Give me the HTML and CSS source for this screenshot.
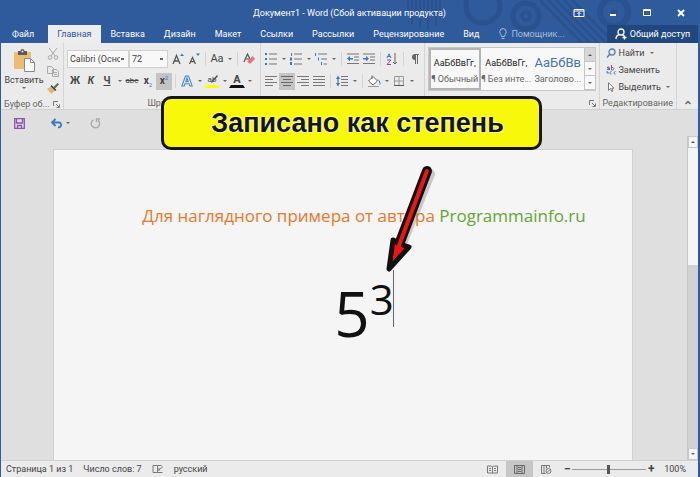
FILE: index.html
```html
<!DOCTYPE html>
<html lang="ru">
<head>
<meta charset="UTF-8">
<meta name="viewport" content="width=device-width, initial-scale=1">
<title>Документ1 - Word</title>
<link rel="stylesheet" href="styles.css">
</head>
<body>

<div class="window">

	<header class="top">
		<svg class="top-pattern" width="340" height="43" viewBox="0 0 340 43" fill="none" stroke="#2a5290">
			<path d="M100 0v16M104 0v24M108 0v12M112 0v28M116 0v18M120 0v30M124 0v14M128 0v26M132 0v16" stroke-width="2"/>
			<circle cx="175" cy="6" r="17" stroke-width="5"/>
			<circle cx="218" cy="16" r="13" stroke-width="5"/>
			<circle cx="218" cy="16" r="4" stroke-width="3"/>
			<path d="M232 0l42 43M240 0l42 43M248 0l42 43M256 0l42 43M264 0l42 43" stroke-width="3"/>
			<circle cx="306" cy="12" r="14" stroke-width="6"/>
			<circle cx="306" cy="12" r="3" fill="#2a5290"/>
		</svg>
		<div class="titlebar">
			<h1 class="title">Документ1 - Word (Сбой активации продукта)</h1>
			<div class="window-controls">
				<button aria-label="Параметры ленты"><svg width="12" height="10" viewBox="0 0 12 10" fill="none" stroke="#fff"><path d="M1 1.500h10v7H1zM1 3h10M6 8V4.500M4.500 6L6 4.500 7.500 6"/></svg></button>
				<button aria-label="Свернуть"><svg width="12" height="10" viewBox="0 0 12 10"><path d="M3 6h6v2H3z" fill="#fff"/></svg></button>
				<button aria-label="Развернуть"><svg width="12" height="10" viewBox="0 0 12 10" fill="none" stroke="#fff"><path d="M2.500 1.500h7v6h-7zM2 2.500h8"/></svg></button>
				<button aria-label="Закрыть"><svg width="12" height="10" viewBox="0 0 12 10" stroke="#fff" stroke-width="2"><path d="M3 2l6 6M9 2L3 8"/></svg></button>
			</div>
		</div>
		<nav class="tabs">
			<a class="tab tab-file" href="#">Файл</a>
			<a class="tab tab-active" href="#">Главная</a>
			<a class="tab" href="#">Вставка</a>
			<a class="tab" href="#">Дизайн</a>
			<a class="tab" href="#">Макет</a>
			<a class="tab" href="#">Ссылки</a>
			<a class="tab" href="#">Рассылки</a>
			<a class="tab" href="#">Рецензирование</a>
			<a class="tab" href="#">Вид</a>
			<label class="helper">
				<svg width="8" height="12" viewBox="0 0 8 12" fill="none" stroke="#a9bddc"><path d="M2.500 8.500C2.500 6.500 .8 6 .8 3.800a3.200 3.200 0 0 1 6.400 0C7.200 6 5.500 6.500 5.500 8.500zM2.500 10.500h3"/></svg>
				<input type="text" placeholder="Помощник..." aria-label="Помощник">
			</label>
			<button class="share">
				<svg width="12" height="12" viewBox="0 0 12 12" fill="none" stroke="#fff" stroke-width="1.300"><circle cx="6" cy="4" r="3"/><path d="M1 11c0-2.500 1.500-4 3.500-4.500M7.500 6.700L9 8M9.500 7.500v4M7.500 9.500h4"/></svg>
				Общий доступ
			</button>
		</nav>
	</header>

	<section class="ribbon">

		<div class="group group-clipboard">
			<div class="clipboard">
				<button class="paste">
					<svg width="23" height="24" viewBox="0 0 23 24"><path d="M1 3h17v17H1z" fill="#ebbd72"/><path d="M5 2h2.500a2 2 0 0 1 4 0H14v4H5z" fill="#5b5b5b"/><circle cx="9.500" cy="2.500" r="1" fill="#e9e9e9"/><path d="M11.500 9.500h6l4 4v9h-10z" fill="#fff" stroke="#8a8a8a"/><path d="M17.500 9.500v4h4" fill="none" stroke="#8a8a8a"/></svg>
					<span>Вставить</span>
					<i class="caret"></i>
				</button>
				<div class="clipboard-tools">
					<button aria-label="Вырезать"><svg width="12" height="12" viewBox="0 0 12 12" fill="none" stroke="#aaa"><path d="M2 0l6 8M10 0L4 8"/><circle cx="3" cy="9.500" r="1.800"/><circle cx="9" cy="9.500" r="1.800"/></svg></button>
					<button aria-label="Копировать"><svg width="12" height="12" viewBox="0 0 12 12" fill="#e9e9e9" stroke="#aaa"><path d="M.5 1.500h4l2 2v5h-6zM5.500 4.500h4l2 2v5h-6zM7 7.500h3M7 9.500h3"/></svg></button>
					<button aria-label="Формат по образцу"><svg width="12" height="12" viewBox="0 0 12 12"><path d="M10.500 1L12 2.500 8 6.500 6.500 5z" fill="#666"/><path d="M4.500 3l5 5L8 9 3.500 4.500z" fill="#444"/><path d="M3.500 5l4 4L4.500 12 0 7z" fill="#eeb368"/></svg></button>
				</div>
			</div>
			<div class="group-label">Буфер об...<svg class="launcher" width="7" height="7" viewBox="0 0 7 7" fill="none" stroke="#777"><path d="M.5 5V.5H5M3 3l3 3M6.500 3.500v3h-3"/></svg></div>
		</div>

		<div class="group group-font">
			<div class="tool-row">
				<select class="combo combo-font" aria-label="Шрифт"><option>Calibri (Основной текст)</option></select>
				<select class="combo combo-size" aria-label="Размер"><option>72</option></select>
				<button class="tool" aria-label="Увеличить размер"><svg width="12" height="12" viewBox="0 0 12 12" fill="none" stroke="#555" stroke-width="1.300"><path d="M1 11L4.500 2.500 8 11M2.300 8h4.400"/><path d="M8 3h4L10 .5z" fill="#3a78b8" stroke="none"/></svg></button>
				<button class="tool" aria-label="Уменьшить размер"><svg width="12" height="12" viewBox="0 0 12 12" fill="none" stroke="#555" stroke-width="1.200"><path d="M1.500 11L4.500 4.500 7.500 11M2.600 8.700h3.800"/><path d="M8 .5h4L10 3z" fill="#3a78b8" stroke="none"/></svg></button>
				<i class="sep"></i>
				<button class="tool tool-case" aria-label="Регистр">Aa</button>
				<i class="caret"></i>
				<i class="sep"></i>
				<button class="tool" aria-label="Очистить формат"><svg width="12" height="12" viewBox="0 0 12 12"><path d="M1 9L4.500 1 7 6M2.500 6H6" fill="none" stroke="#555" stroke-width="1.200"/><path d="M9.500 3L12 6 7 11 4 8.500z" fill="#e8748a"/></svg></button>
			</div>
			<div class="tool-row">
				<button class="tool"><b>Ж</b></button>
				<button class="tool"><b><i>К</i></b></button>
				<button class="tool"><b><u>Ч</u></b></button>
				<i class="caret"></i>
				<button class="tool tool-small"><s>abc</s></button>
				<button class="tool" aria-label="Подстрочный"><b>x</b><span class="mini mini-low">2</span></button>
				<button class="tool tool-on" aria-label="Надстрочный"><b>x</b><span class="mini mini-high">2</span></button>
				<i class="sep"></i>
				<button class="tool" aria-label="Текстовые эффекты"><svg width="12" height="12" viewBox="0 0 12 12" fill="#e9f1fa" stroke="#4a86c2" stroke-width="1.100"><path d="M.8 11L4.500 1h3l3.700 10H8.800L8 8.700H4L3.200 11zM4.700 6.800h2.600L6 3z"/></svg></button>
				<i class="caret"></i>
				<button class="tool tool-mark" aria-label="Цвет выделения">ab<svg class="pen" width="8" height="9" viewBox="0 0 8 9"><path d="M7 0l1 1-5 6-2 1 .5-2z" fill="#555"/></svg></button>
				<i class="caret"></i>
				<button class="tool tool-color" aria-label="Цвет текста">A</button>
				<i class="caret"></i>
			</div>
			<div class="group-label">Шрифт</div>
		</div>

		<div class="group group-paragraph">
			<div class="tool-row">
				<button class="tool" aria-label="Маркеры"><svg width="12" height="12" viewBox="0 0 12 12"><path d="M0 0h2v2H0zM0 5h2v2H0zM0 10h2v2H0z" fill="#3a78b8"/><path d="M4 .5h8v1H4zM4 5.500h8v1H4zM4 10.500h8v1H4z" fill="#777"/></svg></button>
				<i class="caret"></i>
				<button class="tool" aria-label="Нумерация"><svg width="12" height="12" viewBox="0 0 12 12"><path d="M1 0h1v3H1zM0 4.500h2v3H0zM0 9h2v3H0z" fill="#3a78b8"/><path d="M4 .5h8v1H4zM4 5.500h8v1H4zM4 10.500h8v1H4z" fill="#777"/></svg></button>
				<i class="caret"></i>
				<button class="tool" aria-label="Многоуровневый список"><svg width="12" height="12" viewBox="0 0 12 12"><path d="M0 0h1v3H0zM3 4.500h1v3H3zM6 9h1v3H6z" fill="#3a78b8"/><path d="M3 .5h9v1H3zM6 5.500h6v1H6zM8.500 10.500H12v1H8.500z" fill="#777"/></svg></button>
				<i class="caret"></i>
				<i class="sep"></i>
				<button class="tool" aria-label="Уменьшить отступ"><svg width="12" height="12" viewBox="0 0 12 12"><path d="M0 .5h12v1H0zM7 3.500h5v1H7zM7 6.500h5v1H7zM0 10h12v1H0z" fill="#777"/><path d="M0 5.500L3 3v2h3v1.500H3v2z" fill="#3a78b8"/></svg></button>
				<button class="tool" aria-label="Увеличить отступ"><svg width="12" height="12" viewBox="0 0 12 12"><path d="M0 .5h12v1H0zM7 3.500h5v1H7zM7 6.500h5v1H7zM0 10h12v1H0z" fill="#777"/><path d="M6 5.500L3 3v2H0v1.500h3v2z" fill="#3a78b8"/></svg></button>
				<i class="sep"></i>
				<button class="tool" aria-label="Сортировка"><svg width="12" height="12" viewBox="0 0 12 12" fill="none"><path d="M1 5L3 .8 5 5M1.700 3.500h2.600" stroke="#3a78b8"/><path d="M1 7h4l-4 4.500h4" stroke="#8e4a9e"/><path d="M9 0v11M7 9l2 2 2-2" stroke="#666"/></svg></button>
				<i class="sep"></i>
				<button class="tool" aria-label="Знаки абзаца"><svg width="12" height="12" viewBox="0 0 12 12"><path d="M6 7a3 3 0 0 1 0-6h4v1H9v9H8V2H7v9H6z" fill="#666"/></svg></button>
			</div>
			<div class="tool-row">
				<button class="tool" aria-label="По левому краю"><svg width="12" height="10" viewBox="0 0 12 10" fill="#777"><path d="M0 0h12v1H0zM0 3h8v1H0zM0 6h12v1H0zM0 9h8v1H0z"/></svg></button>
				<button class="tool tool-on" aria-label="По центру"><svg width="12" height="10" viewBox="0 0 12 10" fill="#666"><path d="M0 0h12v1H0zM2 3h8v1H2zM0 6h12v1H0zM2 9h8v1H2z"/></svg></button>
				<button class="tool" aria-label="По правому краю"><svg width="12" height="10" viewBox="0 0 12 10" fill="#777"><path d="M0 0h12v1H0zM4 3h8v1H4zM0 6h12v1H0zM4 9h8v1H4z"/></svg></button>
				<button class="tool" aria-label="По ширине"><svg width="12" height="10" viewBox="0 0 12 10" fill="#777"><path d="M0 0h12v1H0zM0 3h12v1H0zM0 6h12v1H0zM0 9h12v1H0z"/></svg></button>
				<i class="sep"></i>
				<button class="tool" aria-label="Интервал"><svg width="12" height="12" viewBox="0 0 12 12"><path d="M5 1h7v1H5zM5 4h7v1H5zM5 7h7v1H5zM5 10h7v1H5z" fill="#777"/><path d="M0 4l2-3.500L4 4H2.600v4H4l-2 3.500L0 8h1.400V4z" fill="#3a78b8"/></svg></button>
				<i class="caret"></i>
				<i class="sep"></i>
				<button class="tool" aria-label="Заливка"><svg width="14" height="12" viewBox="0 0 14 12" fill="#fff" stroke="#666"><path d="M1.500 6L6 1.500 10.500 6 6 10zM5 4V.5"/><path d="M11 4.500c2 2 2 3 2 5" stroke="#3a78b8" fill="none"/><path d="M1 11.500h11" stroke="#999"/></svg></button>
				<i class="caret"></i>
				<button class="tool" aria-label="Границы"><svg width="12" height="12" viewBox="0 0 12 12" fill="none" stroke="#999"><path d="M1.500 1.500h9v9h-9zM6 1v10M1 6h10"/><path d="M1 10.500h10" stroke="#555"/></svg></button>
				<i class="caret"></i>
			</div>
			<div class="group-label">Абзац</div>
		</div>

		<div class="group group-styles">
			<div class="gallery">
				<button class="style style-on"><span class="sample">АаБбВвГг,</span><span class="style-name">¶ Обычный</span></button>
				<button class="style"><span class="sample">АаБбВвГг,</span><span class="style-name">¶ Без инте...</span></button>
				<button class="style"><span class="sample sample-heading">АаБбВв</span><span class="style-name">Заголово...</span></button>
				<div class="gallery-scroll">
					<button class="step-off" aria-label="Вверх"><i class="caret caret-up"></i></button>
					<button aria-label="Вниз"><i class="caret"></i></button>
					<button aria-label="Ещё"><i class="caret caret-more"></i></button>
				</div>
			</div>
			<div class="group-label">Стили<svg class="launcher" width="7" height="7" viewBox="0 0 7 7" fill="none" stroke="#777"><path d="M.5 5V.5H5M3 3l3 3M6.500 3.500v3h-3"/></svg></div>
		</div>

		<div class="group group-editing">
			<div class="editing">
				<button><svg width="10" height="10" viewBox="0 0 10 10" fill="none" stroke="#4a7db8" stroke-width="1.300"><circle cx="6" cy="4" r="3"/><path d="M4 6L1 9.500"/></svg>Найти<i class="caret"></i></button>
				<button><svg width="10" height="10" viewBox="0 0 10 10" fill="none"><path d="M1 2.500c2-1 2.500 0 2.500 1v1.500M3.500 3.500c-3 0-3 1.800 0 1" stroke="#555"/><path d="M5.500 0v5c3 .5 3-3 0-2.500" stroke="#8e4a9e"/><path d="M5.500 6.500c-2 0-2 3 0 2.500M9.500 6.500c-2 0-2 3 0 2.500M1 6v2h2" stroke="#3a78b8"/></svg>Заменить</button>
				<button><svg width="10" height="10" viewBox="0 0 10 10" fill="#fff" stroke="#777"><path d="M2.500 .8v7.500L4.500 6.500l1.300 3 1.200-.6-1.200-2.700H8z"/></svg>Выделить<i class="caret"></i></button>
			</div>
			<div class="group-label">Редактирование</div>
		</div>

		<button class="collapse" aria-label="Свернуть ленту"><svg width="8" height="5" viewBox="0 0 8 5" fill="none" stroke="#666" stroke-width="1.500"><path d="M1.500 4L4 1.500 6.500 4"/></svg></button>
	</section>

	<div class="quick">
		<button aria-label="Сохранить"><svg width="11" height="11" viewBox="0 0 11 11" fill="none" stroke="#8a55a8" stroke-width="1.300"><path d="M.7.7h9.600v9.600H.7zM2.500 1v4h6V1M3.500 10V7.500h4V10"/></svg></button>
		<button class="undo" aria-label="Отменить"><svg width="12" height="11" viewBox="0 0 12 11" fill="none" stroke="#3a78c0" stroke-width="1.800"><path d="M1 4.500h7c3 0 3 5-1 5M4.500 1L1 4.500 4.500 8"/></svg></button>
		<i class="caret"></i>
		<button class="redo" aria-label="Повторить"><svg width="11" height="11" viewBox="0 0 11 11" fill="none" stroke="#aaa" stroke-width="1.400"><path d="M3.500 1.800a4.200 4.200 0 1 0 4.500.5M6.500 4V1h3.500"/></svg></button>
	</div>

	<main class="workspace">
		<article class="sheet">
			<p class="caption">Для наглядного примера от автора <span class="site">Programmainfo.ru</span></p>
			<p class="formula">
				<span class="power">5<sup>3</sup>
					<svg class="arrow" width="60" height="112" viewBox="0 0 60 112">
						<path d="M50 10L21 82" stroke="#777" stroke-width="10" stroke-linecap="round" opacity=".35"/>
						<path d="M47 7L20 78" stroke="#111" stroke-width="10" stroke-linecap="round"/>
						<path d="M13 76l5 3 5 2 6 2L9 105z" fill="#f01414" stroke="#111" stroke-width="5" stroke-linejoin="round"/>
						<path d="M47 7L18 84" stroke="#f01414" stroke-width="4" stroke-linecap="round"/>
					</svg>
				</span>
			</p>
		</article>
		<div class="scrollbar">
			<button aria-label="Прокрутить вверх"><i class="caret caret-up"></i></button>
			<div class="scroll-thumb"></div>
			<button class="scroll-down" aria-label="Прокрутить вниз"><i class="caret"></i></button>
		</div>
	</main>

	<footer class="status">
		<span>Страница 1 из 1</span>
		<span>Число слов: 7</span>
		<svg class="proofing" width="12" height="10" viewBox="0 0 12 10" fill="none" stroke="#777"><path d="M5.500 1.500H1v7h4.500zM5.500 1.500h4M5.500 8.500h5M7 6l4-3.500M7 4v3"/></svg>
		<span>русский</span>
		<div class="views">
			<button aria-label="Режим чтения"><svg width="11" height="9" viewBox="0 0 11 9" fill="none" stroke="#777"><path d="M.5 1h4l1 1 1-1h4v7h-4l-1 .5-1-.5h-4zM5.500 2v6M2 3.500h2M2 5.500h2M7 3.500h2M7 5.500h2"/></svg></button>
			<button class="view-on" aria-label="Разметка страницы"><svg width="11" height="9" viewBox="0 0 11 9" fill="none" stroke="#666"><path d="M.5.5h10v8H.5zM3 .5v8M8 .5v8M4 2.500h3M4 4.500h3M4 6.500h3"/></svg></button>
			<button aria-label="Веб-документ"><svg width="11" height="9" viewBox="0 0 11 9" fill="none" stroke="#777"><path d="M4.500 8.500h-4v-8h8v2M3 .5v8M5.500.5v3"/><circle cx="7.500" cy="6" r="2.500"/><path d="M6 7.500l3-3"/></svg></button>
		</div>
		<div class="zoom">
			<button aria-label="Уменьшить">−</button>
			<input type="range" min="0" max="100" value="49" aria-label="Масштаб">
			<button aria-label="Увеличить">+</button>
			<span>100%</span>
		</div>
	</footer>

	<div class="callout">Записано как степень</div>
</div>

</body>
</html>
```
FILE: styles.css
```css
* {
	box-sizing: border-box;
}

body {
	margin: 0;
	font-family: Roboto, "Noto Sans", sans-serif;
	font-size: 9px;
	line-height: 12px;
	color: #444;
}

button,
input,
select {
	margin: 0;
	padding: 0;
	border: 0;
	border-radius: 0;
	background: none;
	font: inherit;
	color: inherit;
}

button {
	display: flex;
	align-items: center;
	justify-content: center;
	white-space: nowrap;
}

svg {
	display: block;
	flex: none;
}

.window {
	position: relative;
	display: flex;
	flex-direction: column;
	min-height: 100vh;
	border-left: 1px solid #2f5b9f;
	border-right: 2px solid #2f5b9f;
	background: #dfdfdf;
	overflow: hidden;
}

/* Title bar and tabs */

.top {
	position: relative;
	background: #2f5a9b;
	color: #fff;
}

.top-pattern {
	position: absolute;
	top: 0;
	right: 50px;
}

.titlebar {
	position: relative;
	display: flex;
	align-items: center;
	height: 25px;
}

.title {
	flex: 1;
	margin: 0;
	padding-left: 136px;
	font-size: 9px;
	font-weight: normal;
	text-align: center;
}

.window-controls {
	display: flex;
}

.window-controls button {
	width: 34px;
	height: 24px;
}

.tabs {
	position: relative;
	display: flex;
	height: 18px;
	line-height: 18px;
}

.tab {
	padding: 0 10px 0 9px;
	color: #fff;
	text-decoration: none;
}

.tab-file {
	padding: 0 14px 0 11px;
}

.tab-active {
	background: #ededed;
	color: #2f5a9b;
}

.helper {
	display: flex;
	align-items: center;
	gap: 4px;
	flex: 1;
	min-width: 0;
	padding-left: 10px;
}

.helper input {
	width: 100%;
	min-width: 0;
}

.helper input::placeholder {
	color: #a9bddc;
	opacity: 1;
}

.share {
	gap: 3px;
	width: 91px;
	background: #20487f;
}

/* Ribbon */

.ribbon {
	display: flex;
	height: 67px;
	border-bottom: 1px solid #d0d0d0;
	background: #ebebeb;
}

.group {
	display: flex;
	flex-direction: column;
	gap: 4px;
	padding: 7px 3px 0;
	border-right: 1px solid #d4d4d4;
}

.group-clipboard {
	flex: 0 0 63px;
	padding-top: 4px;
}

.group-font {
	flex: 0 0 195px;
}

.group-paragraph {
	flex: 0 0 164px;
	padding-left: 2px;
	padding-right: 0;
}

.group-styles {
	flex: 1;
	padding-top: 4px;
	min-width: 0;
}

.group-editing {
	flex: 0 0 72px;
	padding-top: 4px;
}

.group-label {
	position: relative;
	margin-top: auto;
	text-align: center;
	color: #666;
	white-space: nowrap;
}

.group-clipboard .group-label {
	text-align: left;
}

.launcher {
	position: absolute;
	right: 0;
	bottom: 2px;
}

.caret {
	flex: none;
	display: block;
	width: 9px;
}

.caret::before {
	content: "";
	display: block;
	width: 0;
	margin: 0 auto;
	border: 2px solid transparent;
	border-top-color: #666;
	border-bottom: 0;
}

.caret-up::before {
	border-top: 0;
	border-bottom: 2px solid #555;
}

.caret-more::before {
	border-top: 2px solid #666;
	box-shadow: 0 -2px 0 -1px #666;
}

.sep {
	flex: none;
	width: 1px;
	height: 14px;
	margin: 0 3px;
	background: #d4d4d4;
}

.clipboard {
	display: flex;
	gap: 3px;
}

.paste {
	flex-direction: column;
	width: 40px;
	height: 44px;
	gap: 1px;
}

.clipboard-tools {
	display: flex;
	flex-direction: column;
	gap: 4px;
}

.clipboard-tools button {
	height: 13px;
}

.tool-row {
	display: flex;
	align-items: center;
	height: 18px;
}

.tool {
	position: relative;
	flex: none;
	width: 16px;
	height: 17px;
	font-size: 10px;
}

.tool-on {
	background: #c4c4c4;
}

.tool-case {
	font-size: 11px;
}

.tool-small {
	font-size: 8px;
}

.mini {
	color: #3a78b8;
	font-size: 6px;
	line-height: 6px;
}

.mini-low {
	align-self: flex-end;
	padding-bottom: 2px;
}

.mini-high {
	align-self: flex-start;
	padding-top: 2px;
}

.tool-mark,
.tool-color {
	height: 14px;
	font-size: 8px;
	border: solid #ff0;
	border-width: 0 2px 3px;
	border-left-color: transparent;
	border-right-color: transparent;
}

.tool-color {
	font-size: 11px;
	font-weight: bold;
	border-bottom-color: #111;
}

.pen {
	position: absolute;
	top: 1px;
	right: 0;
}

.combo {
	appearance: none;
	height: 18px;
	padding: 0 8px 0 2px;
	border: 1px solid #d0d0d0;
	background: #f8f8f8 linear-gradient(#666, #666) no-repeat right 4px center / 3px 2px;
	text-overflow: clip;
}

.combo-font {
	width: 62px;
}

.combo-size {
	width: 39px;
	margin: 0 2px 0 0;
}

/* Styles gallery */

.gallery {
	display: flex;
	height: 44px;
	border: 1px solid #c6c6c6;
	background: #f8f8f8;
}

.style {
	flex: 1;
	flex-direction: column;
	min-width: 0;
	gap: 4px;
	border: 2px solid transparent;
}

.style-on {
	border-color: #b4b4b4;
}

.sample {
	height: 16px;
	line-height: 20px;
	color: #222;
}

.sample-heading {
	font-size: 13px;
	color: #4a74ac;
}

.style-name {
	color: #666;
}

.gallery-scroll {
	display: flex;
	flex-direction: column;
	width: 11px;
	border-left: 1px solid #c6c6c6;
}

.gallery-scroll button {
	flex: 1;
	border-bottom: 1px solid #c6c6c6;
}

.gallery-scroll .step-off {
	background: #d8d8d8;
}

.editing {
	display: flex;
	flex-direction: column;
	align-items: flex-start;
	gap: 5px;
	padding-left: 3px;
}

.editing button {
	gap: 3px;
}

.collapse {
	align-self: flex-end;
	width: 21px;
	height: 13px;
}

/* Quick access bar */

.quick {
	display: flex;
	align-items: center;
	height: 26px;
	padding-left: 13px;
}

.undo {
	margin-left: 26px;
}

.redo {
	margin-left: 18px;
}

/* Document */

.workspace {
	flex: 1;
	display: flex;
}

.sheet {
	flex: 1;
	margin: 13px 54px 0 52px;
	padding: 52px 0 0 42px;
	border: 1px solid #d0d0d0;
	border-bottom: 0;
	background: #f5f5f5;
	font-family: "Open Sans", "Noto Sans", sans-serif;
	text-align: center;
}

.caption {
	margin: 0;
	font-size: 17px;
	line-height: 28px;
	color: #e8792c;
	white-space: nowrap;
}

.site {
	color: #64a636;
}

.formula {
	margin: 43px 0 0;
	font-size: 62px;
	font-weight: 500;
	line-height: 80px;
	color: #111;
}

.power {
	position: relative;
	display: inline-block;
	line-height: 58px;
}

.power::after {
	content: "";
	position: absolute;
	top: -8px;
	right: 0;
	width: 1px;
	height: 57px;
	background: #666;
}

.power sup {
	font-size: 42px;
	font-weight: normal;
	line-height: 1;
}

.arrow {
	position: absolute;
	top: -114px;
	right: -46px;
}

.scrollbar {
	display: flex;
	flex-direction: column;
	width: 11px;
	border-left: 1px solid #c8c8c8;
	background: #d2d2d2;
}

.scrollbar button {
	height: 12px;
	border: 1px solid #c8c8c8;
	background: #f5f5f5;
}

.scroll-thumb {
	height: 36%;
	background: #f5f5f5;
}

.scrollbar .scroll-down {
	margin-top: auto;
}

/* Status bar */

.status {
	display: flex;
	align-items: center;
	height: 17px;
	padding: 0 12px 0 5px;
	border-top: 1px solid #d0d0d0;
	background: #ebebeb;
	white-space: nowrap;
}

.status > span,
.proofing {
	margin-right: 10px;
}

.views {
	display: flex;
	margin-left: auto;
}

.views button {
	width: 27px;
	height: 16px;
}

.view-on {
	background: #c6c6c6;
}

.zoom {
	display: flex;
	align-items: center;
	padding-left: 2px;
}

.zoom button {
	width: 10px;
	font-size: 12px;
	font-weight: bold;
}

.zoom input {
	appearance: none;
	width: 74px;
	height: 10px;
	background: linear-gradient(#999, #999) no-repeat center / 100% 1px;
}

.zoom input::-webkit-slider-thumb {
	appearance: none;
	width: 3px;
	height: 9px;
	background: #555;
}

.zoom span {
	margin-left: 8px;
}

/* Yellow note over the ribbon */

.callout {
	position: absolute;
	top: 96px;
	left: 4px;
	right: 0;
	width: 381px;
	margin: 0 auto;
	padding-left: 12px;
	border: 3px solid #151515;
	border-radius: 10px;
	background: #f8f80a;
	font: bold 27px/48px "Liberation Sans", Arial, sans-serif;
	color: #15151f;
	text-align: center;
	text-shadow: 0 0 2px #fff, 0 0 2px #fff;
	white-space: nowrap;
}
```
